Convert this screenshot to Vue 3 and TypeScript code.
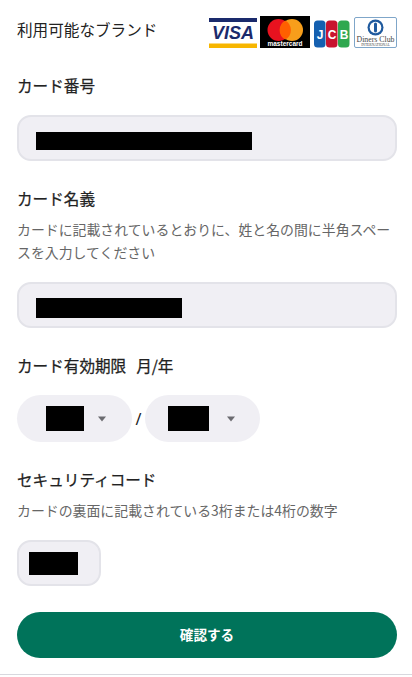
<script setup lang="ts">
const fontNote = 'form'
</script>

<template>
  <div class="page" :data-kind="fontNote">
    <div class="brands">
      <span class="brands-title">利用可能なブランド</span>
      <div class="logos">
        <svg class="logo" width="48" height="31" viewBox="0 0 48 31">
          <rect y="1" width="48" height="4" fill="#1a2a6c" />
          <rect y="26.500" width="48" height="4.500" fill="#f7b600" />
          <text x="24" y="22" text-anchor="middle" class="visa">VISA</text>
        </svg>
        <svg class="logo" width="50" height="32" viewBox="0 0 50 32">
          <rect width="50" height="32" fill="#000" />
          <circle cx="18.500" cy="14" r="11" fill="#e8121f" />
          <circle cx="32" cy="14" r="11" fill="#f79e1b" />
          <path d="M25.250 4.400a11 11 0 0 1 0 19.200a11 11 0 0 1 0-19.200z" fill="#ff5f00" />
          <text x="25" y="30" text-anchor="middle" class="mc">mastercard</text>
        </svg>
        <svg class="logo jcb-logo" width="36" height="28" viewBox="0 0 36 28">
          <rect x="0" y="0.500" width="11.500" height="27" rx="3.500" fill="#1560b0" />
          <rect x="12" y="0.500" width="11.500" height="27" rx="3.500" fill="#c8142f" />
          <rect x="24" y="0.500" width="11.500" height="27" rx="3.500" fill="#2fa84f" />
          <text x="6" y="18.500" text-anchor="middle" class="jcb">J</text>
          <text x="18" y="18.500" text-anchor="middle" class="jcb">C</text>
          <text x="30" y="18.500" text-anchor="middle" class="jcb">B</text>
        </svg>
        <svg class="logo diners-logo" width="43" height="31" viewBox="0 0 43 31">
          <rect x="0.500" y="0.500" width="42" height="30" rx="1.500" fill="#fff" stroke="#7fa6c9" />
          <circle cx="21.500" cy="10.500" r="8" fill="#1f5a9e" />
          <circle cx="21.500" cy="10.500" r="5.800" fill="#fff" />
          <rect x="20" y="5.500" width="3" height="10" rx="1.500" fill="#1f5a9e" />
          <text x="21.500" y="25" text-anchor="middle" class="diners">Diners Club</text>
          <text x="21.500" y="29" text-anchor="middle" class="diners-sub">INTERNATIONAL</text>
        </svg>
      </div>
    </div>

    <section class="field first">
      <h2 class="label">カード番号</h2>
      <div class="input number"><span class="mask mask-number"></span></div>
    </section>

    <section class="field second">
      <h2 class="label">カード名義</h2>
      <p class="hint">カードに記載されているとおりに、姓と名の間に半角スペースを入力してください</p>
      <div class="input name"><span class="mask mask-name"></span></div>
    </section>

    <section class="field third">
      <h2 class="label">カード有効期限&nbsp;&nbsp;<span class="unit">月/年</span></h2>
      <div class="expiry">
        <div class="select month">
          <span class="mask mask-month"></span>
          <svg class="caret" width="10" height="6" viewBox="0 0 10 6"><path d="M1 0.500h8L5 5.500z" fill="#6b6b70" /></svg>
        </div>
        <span class="slash">/</span>
        <div class="select year">
          <span class="mask mask-year"></span>
          <svg class="caret" width="10" height="6" viewBox="0 0 10 6"><path d="M1 0.500h8L5 5.500z" fill="#6b6b70" /></svg>
        </div>
      </div>
    </section>

    <section class="field fourth">
      <h2 class="label">セキュリティコード</h2>
      <p class="hint single">カードの裏面に記載されている3桁または4桁の数字</p>
      <div class="input cvv"><span class="mask mask-cvv"></span></div>
    </section>

    <button class="submit" type="button">確認する</button>
    <div class="rule"></div>
  </div>
</template>

<style scoped>
.page {
  width: 412px;
  height: 677px;
  box-sizing: border-box;
  padding: 16px 15px 0 17px;
  background: #fff;
  overflow: hidden;
  position: relative;
  font-family: "Noto Sans CJK JP", "Noto Sans", sans-serif;
  color: #222;
}
.brands {
  display: flex;
  align-items: center;
  justify-content: space-between;
  height: 32px;
}
.brands-title { font-size: 15.600px; line-height: 26px; color: #222; margin-top: -6px; }
.logos { display: flex; align-items: center; gap: 3px; }
.logo { display: block; flex: none; }
.jcb-logo { margin-top: 3px; margin-left: 1px; }
.diners-logo { margin-left: 1px; }
.visa { font: italic 800 18px "Liberation Sans", sans-serif; fill: #1a2a6c; }
.mc { font: 700 6.500px "Liberation Sans", sans-serif; fill: #fff; }
.jcb { font: 700 12px "Liberation Sans", sans-serif; fill: #fff; }
.diners { font: 7.800px "Liberation Serif", serif; fill: #444; }
.diners-sub { font: 3.600px "Liberation Serif", serif; fill: #444; }
.field { display: block; }
.first { margin-top: 25px; }
.second { margin-top: 25px; }
.third { margin-top: 25px; }
.fourth { margin-top: 25px; }
.label {
  margin: 0;
  font-size: 15.600px;
  font-weight: 400;
  -webkit-text-stroke: 0.25px #222;
  line-height: 24px;
  color: #222;
}
.unit { margin-left: 3px; }
.hint {
  margin: 8px 0 0;
  font-size: 13.900px;
  line-height: 23px;
  color: #666;
}
.input {
  box-sizing: border-box;
  display: flex;
  align-items: center;
  background: #f0eff4;
  border: 2px solid #e3e3e9;
  border-radius: 14px;
}
.number { height: 46px; margin-top: 18px; padding: 6px 0 0 17px; }
.name { height: 46px; margin-top: 18px; padding: 6px 0 0 17px; }
.cvv { width: 84px; height: 46px; margin-top: 18px; padding-left: 10px; }
.mask { display: block; background: #000; flex: none; }
.mask-number { width: 216px; height: 18px; }
.mask-name { width: 146px; height: 20px; }
.mask-month { width: 38px; height: 25px; }
.mask-year { width: 41px; height: 25px; }
.mask-cvv { width: 49px; height: 23px; }
.expiry { display: flex; align-items: center; margin-top: 18px; }
.select {
  width: 115px;
  height: 47px;
  box-sizing: border-box;
  display: flex;
  align-items: center;
  background: #f0eff4;
  border-radius: 24px;
}
.month { padding-left: 29px; }
.year { padding-left: 23px; }
.month .caret { margin-left: 13px; }
.year .caret { margin-left: 17px; }
.caret { display: block; flex: none; }
.slash {
  width: 13px;
  text-align: center;
  font-size: 16px;
  color: #222;
  font-family: "Noto Sans", sans-serif;
}
.submit {
  display: block;
  width: 380px;
  height: 46px;
  margin-top: 26px;
  padding: 0 0 3px;
  border: 0;
  border-radius: 23px;
  background: #00735a;
  color: #fff;
  font-family: inherit;
  font-size: 13.600px;
  font-weight: 700;
}
.rule {
  position: absolute;
  left: 0;
  right: 0;
  top: 674px;
  height: 1px;
  background: #d8d8de;
}
</style>
